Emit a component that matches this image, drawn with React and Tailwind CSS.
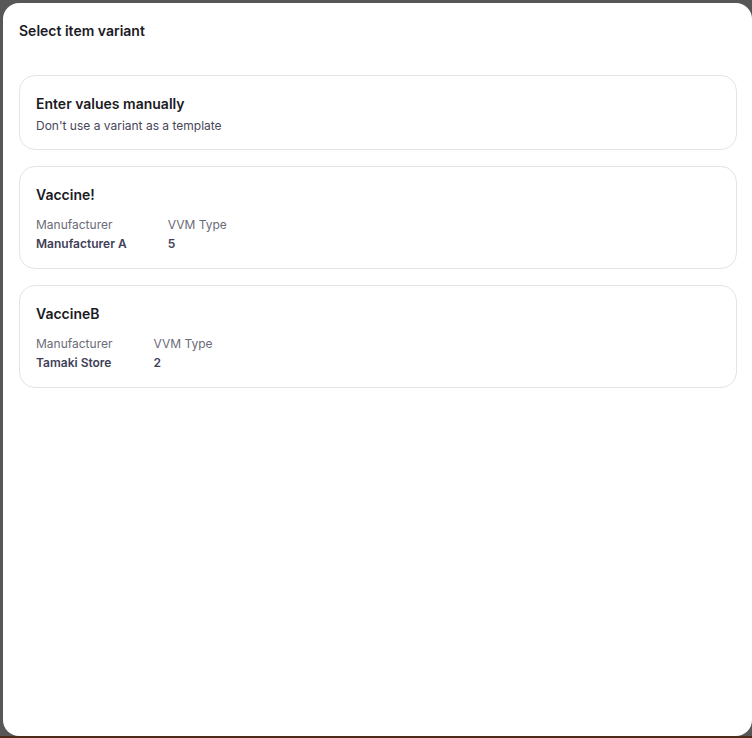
import React from 'react';

const variants = [
  { name: 'Vaccine!', manufacturer: 'Manufacturer A', vvmType: '5' },
  { name: 'VaccineB', manufacturer: 'Tamaki Store', vvmType: '2' },
];

const Field = ({ label, value }) => (
  <div className="flex flex-col">
    <span className="text-[12px] leading-[19px] text-[#6b6b78]">{label}</span>
    <span className="text-[12px] leading-[19px] font-semibold text-[#3f3f58]">{value}</span>
  </div>
);

const VariantCard = ({ variant }) => (
  <button className="w-full text-left rounded-2xl border border-[#e4e4e7] bg-white px-4 pt-4 pb-[15px] hover:bg-gray-50">
    <div className="text-[14px] leading-6 font-semibold text-[#1b1b24]">{variant.name}</div>
    <div className="mt-2 flex gap-[41px]">
      <Field label="Manufacturer" value={variant.manufacturer} />
      <Field label="VVM Type" value={variant.vvmType} />
    </div>
  </button>
);

export default function App() {
  return (
    <div
      className="h-[738px] w-full bg-[#585757] pt-[3px] pl-[3px] border-b-2 border-[#4a2a18]"
      style={{ fontFamily: 'Inter, "Noto Sans", sans-serif' }}
    >
      <div className="h-full w-full rounded-2xl bg-white pl-4 pr-[15px]">
        <h2 className="pt-[18px] text-[14px] leading-5 font-semibold text-[#1b1b24]">Select item variant</h2>

        <div className="mt-[34px] flex flex-col gap-4">
          <button className="w-full text-left rounded-2xl border border-[#e4e4e7] bg-white px-4 pt-4 pb-[14px] hover:bg-gray-50">
            <div className="text-[14px] leading-6 font-semibold text-[#1b1b24]">Enter values manually</div>
            <div className="text-[12px] leading-[19px] text-[#474759]">Don't use a variant as a template</div>
          </button>
          {variants.map((v) => (
            <VariantCard key={v.name} variant={v} />
          ))}
        </div>
      </div>
    </div>
  );
}
